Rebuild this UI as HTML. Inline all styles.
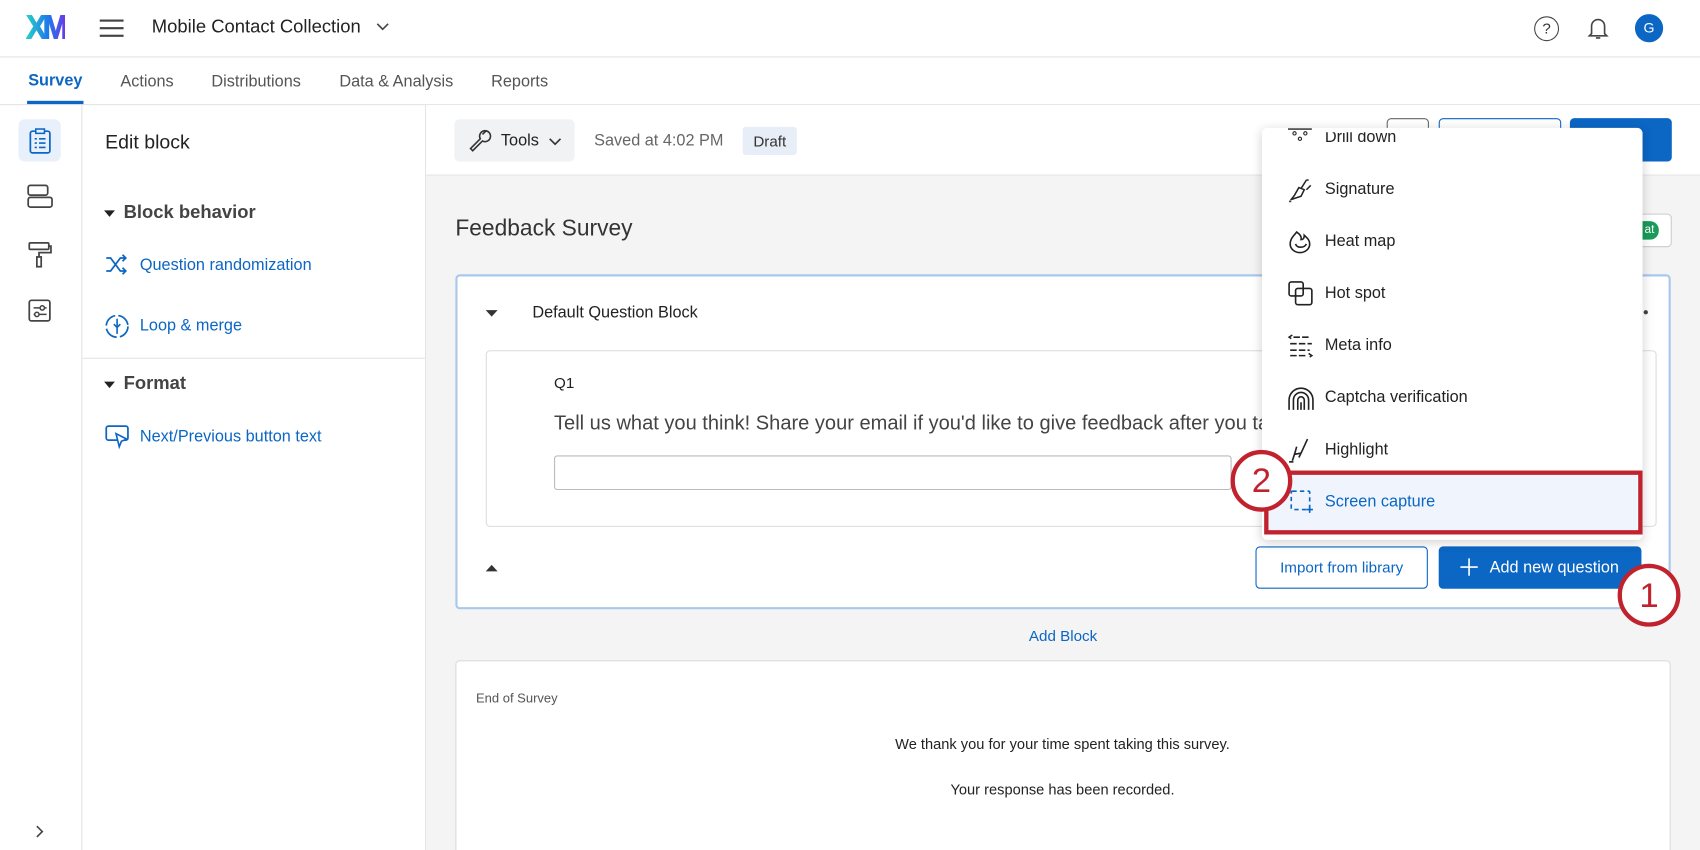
<!DOCTYPE html>
<html><head><meta charset="utf-8"><style>
*{box-sizing:border-box;margin:0;padding:0}
html,body{width:1700px;height:850px;overflow:hidden;background:#fff;font-family:"Liberation Sans",sans-serif}
#w{width:1568px;height:784px;position:relative;transform:scale(1.08418);transform-origin:0 0;color:#222}
.a{position:absolute}
.t{position:absolute;white-space:nowrap}
.blue{color:#0b66c4}
svg{position:absolute;overflow:visible}
</style></head><body><div id="w">
<!-- header -->
<div class="a" style="left:0;top:0;width:1568px;height:53px;border-bottom:1px solid #e4e4e4"></div>
<div class="t" style="left:24px;top:10px;font-size:29px;font-weight:900;letter-spacing:-4px;background:linear-gradient(90deg,#2ad1c6,#1e7bea 55%,#6a3be8);-webkit-background-clip:text;color:transparent;-webkit-text-stroke:0.8px transparent;transform:scaleY(1.05)">XM</div>
<div class="a" style="left:92px;top:18px;width:22px;height:2px;background:#444"></div>
<div class="a" style="left:92px;top:25px;width:22px;height:2px;background:#444"></div>
<div class="a" style="left:92px;top:32px;width:22px;height:2px;background:#444"></div>
<div class="t" style="left:140px;top:15px;font-size:17px;color:#222">Mobile Contact Collection</div>
<svg style="left:347px;top:21px" width="12" height="8"><path d="M1 1l5 5 5-5" fill="none" stroke="#444" stroke-width="1.5"/></svg>
<div class="a" style="left:1415px;top:15px;width:23px;height:23px;border:1.5px solid #444;border-radius:50%;font-size:14px;text-align:center;line-height:20px;color:#333">?</div>
<svg style="left:1464px;top:14px" width="20" height="24"><path d="M4 17V10a6 6 0 0 1 12 0v7l2 2H2z M8 21h4" fill="none" stroke="#444" stroke-width="1.5"/></svg>
<div class="a" style="left:1508px;top:13px;width:26px;height:26px;border-radius:50%;background:#0b66c4;color:#fff;font-size:13px;text-align:center;line-height:26px">G</div>
<!-- tabs -->
<div class="a" style="left:0;top:96px;width:1568px;height:1px;background:#e4e4e4"></div>
<div class="t" style="left:26px;top:66px;font-size:15px;font-weight:bold;color:#0b66c4">Survey</div>
<div class="a" style="left:25px;top:93px;width:52px;height:3px;background:#0b66c4"></div>
<div class="t" style="left:111px;top:67px;font-size:15px;color:#555">Actions</div>
<div class="t" style="left:195px;top:67px;font-size:15px;color:#555">Distributions</div>
<div class="t" style="left:313px;top:67px;font-size:15px;color:#555">Data &amp; Analysis</div>
<div class="t" style="left:453px;top:67px;font-size:15px;color:#555">Reports</div>
<!-- rail -->
<div class="a" style="left:75px;top:97px;width:1px;height:687px;background:#e4e4e4"></div>
<div class="a" style="left:17px;top:110px;width:39px;height:39px;background:#e8f0fb;border-radius:6px"></div>
<svg style="left:27px;top:118px" width="20" height="24"><rect x="1" y="3" width="18" height="20" rx="2" fill="none" stroke="#0b66c4" stroke-width="1.6"/><rect x="6" y="1" width="8" height="4" fill="#e8f0fb" stroke="#0b66c4" stroke-width="1.4"/><path d="M5 10h2M9 10h6M5 14h2M9 14h6M5 18h2M9 18h6" stroke="#0b66c4" stroke-width="1.5"/></svg>
<svg style="left:25px;top:170px" width="24" height="24"><rect x="1" y="1" width="18" height="9" rx="2" fill="none" stroke="#444" stroke-width="1.6"/><rect x="1" y="12" width="22" height="9" rx="2" fill="none" stroke="#444" stroke-width="1.6"/></svg>
<svg style="left:26px;top:222px" width="22" height="26"><rect x="1" y="2" width="18" height="6" rx="1" fill="none" stroke="#444" stroke-width="1.6"/><path d="M19 5h2v6H10v4" fill="none" stroke="#444" stroke-width="1.6"/><rect x="8" y="15" width="4" height="9" fill="none" stroke="#444" stroke-width="1.6"/></svg>
<svg style="left:26px;top:276px" width="22" height="22"><rect x="1" y="1" width="19" height="19" rx="2" fill="none" stroke="#444" stroke-width="1.6"/><path d="M5 8h12M5 14h12" stroke="#444" stroke-width="1.4"/><circle cx="13" cy="8" r="2" fill="#fff" stroke="#444" stroke-width="1.4"/><circle cx="8" cy="14" r="2" fill="#fff" stroke="#444" stroke-width="1.4"/></svg>
<svg style="left:33px;top:761px" width="8" height="12"><path d="M1 1l5 5-5 5" fill="none" stroke="#444" stroke-width="1.5"/></svg>
<!-- edit panel -->
<div class="a" style="left:392px;top:97px;width:1px;height:687px;background:#e4e4e4"></div>
<div class="t" style="left:97px;top:121px;font-size:18px;color:#222">Edit block</div>
<svg style="left:96px;top:194px" width="10" height="6"><path d="M0 0h10L5 6z" fill="#222"/></svg>
<div class="t" style="left:114px;top:186px;font-size:17px;font-weight:bold;color:#444">Block behavior</div>
<svg style="left:97px;top:234px" width="22" height="20"><path d="M1 4h4l9 12h5M1 16h4l9-12h5M16 1l3 3-3 3M16 13l3 3-3 3" fill="none" stroke="#0b66c4" stroke-width="1.6"/></svg>
<div class="t blue" style="left:129px;top:236px;font-size:15px">Question randomization</div>
<svg style="left:97px;top:290px" width="22" height="22"><circle cx="11" cy="11" r="10" fill="none" stroke="#0b66c4" stroke-width="1.6" stroke-dasharray="13 3"/><path d="M11 4v8M8 9l3 3 3-3M11 18v-6" fill="none" stroke="#0b66c4" stroke-width="1.5"/></svg>
<div class="t blue" style="left:129px;top:292px;font-size:15px">Loop &amp; merge</div>
<div class="a" style="left:76px;top:330px;width:316px;height:1px;background:#e4e4e4"></div>
<svg style="left:96px;top:352px" width="10" height="6"><path d="M0 0h10L5 6z" fill="#222"/></svg>
<div class="t" style="left:114px;top:344px;font-size:17px;font-weight:bold;color:#444">Format</div>
<svg style="left:97px;top:392px" width="24" height="22"><rect x="1" y="1" width="20" height="13" rx="2" fill="none" stroke="#0b66c4" stroke-width="1.6"/><path d="M10 8l3 12 2-5 5-2z" fill="#fff" stroke="#0b66c4" stroke-width="1.5"/></svg>
<div class="t blue" style="left:129px;top:394px;font-size:15px">Next/Previous button text</div>
<!-- main -->
<div class="a" style="left:393px;top:97px;width:1175px;height:687px;background:#f4f4f4"></div>
<div class="a" style="left:393px;top:97px;width:1175px;height:65px;background:#fff;border-bottom:1px solid #e4e4e4"></div>
<div class="a" style="left:419px;top:110px;width:111px;height:39px;background:#f1f2f4;border-radius:5px"></div>
<svg style="left:431px;top:118px" width="22" height="22"><path d="M3 19l9-9a5 5 0 1 1 2 2l-9 9z M14 6l3-3" fill="none" stroke="#333" stroke-width="1.5"/></svg>
<div class="t" style="left:462px;top:121px;font-size:15px;color:#222">Tools</div>
<svg style="left:506px;top:127px" width="12" height="8"><path d="M1 1l5 5 5-5" fill="none" stroke="#333" stroke-width="1.5"/></svg>
<div class="t" style="left:548px;top:121px;font-size:15px;color:#666">Saved at 4:02 PM</div>
<div class="a" style="left:685px;top:117px;width:50px;height:26px;background:#e8eef7;border-radius:3px;font-size:14px;text-align:center;line-height:26px;color:#333">Draft</div>
<div class="a" style="left:1279px;top:109px;width:39px;height:40px;border:1px solid #666;border-radius:4px;background:#fff"></div>
<div class="a" style="left:1327px;top:109px;width:113px;height:40px;border:1px solid #0b66c4;border-radius:4px;background:#fff"></div>
<div class="a" style="left:1448px;top:109px;width:94px;height:40px;background:#0b66c4;border-radius:4px"></div>
<div class="t" style="left:420px;top:199px;font-size:21px;color:#333">Feedback Survey</div>
<div class="a" style="left:1500px;top:197px;width:42px;height:31px;background:#fff;border:1px solid #ccc;border-radius:4px"></div>
<div class="a" style="left:1506px;top:204px;width:24px;height:17px;background:#1a9b5a;border-radius:8px;color:#fff;font-size:11px;line-height:17px;text-align:right;padding-right:4px">at</div>
<!-- block -->
<div class="a" style="left:420px;top:253px;width:1121px;height:309px;background:#fff;border:2px solid #a9c8ec;border-radius:4px"></div>
<svg style="left:448px;top:286px" width="11" height="6"><path d="M0 0h11L5.5 6z" fill="#333"/></svg>
<div class="t" style="left:491px;top:280px;font-size:15px;color:#222">Default Question Block</div>
<div class="a" style="left:1516px;top:286px;width:4px;height:4px;border-radius:50%;background:#444"></div>
<div class="a" style="left:448px;top:323px;width:1080px;height:163px;border:1px solid #dcdcdc;border-radius:4px;background:#fff"></div>
<div class="t" style="left:511px;top:345px;font-size:14px;color:#222">Q1</div>
<div class="t" style="left:511px;top:379px;font-size:18.5px;color:#444">Tell us what you think! Share your email if you'd like to give feedback after you take this survey.</div>
<div class="a" style="left:511px;top:420px;width:625px;height:32px;border:1px solid #bbb;border-radius:3px;background:#fff"></div>
<svg style="left:448px;top:521px" width="11" height="6"><path d="M0 6h11L5.5 0z" fill="#333"/></svg>
<div class="a" style="left:1158px;top:504px;width:159px;height:39px;border:1px solid #0b66c4;border-radius:4px;background:#fff;font-size:14px;color:#0b66c4;text-align:center;line-height:37px">Import from library</div>
<div class="a" style="left:1327px;top:504px;width:187px;height:39px;border-radius:4px;background:#0b66c4;color:#fff;font-size:15px;line-height:39px;padding-left:47px">Add new question</div>
<svg style="left:1347px;top:515px" width="16" height="16"><path d="M8 0v16M0 8h16" stroke="#fff" stroke-width="1.5"/></svg>
<div class="t blue" style="left:949px;top:578px;font-size:14px">Add Block</div>
<!-- end -->
<div class="a" style="left:420px;top:609px;width:1121px;height:180px;background:#fff;border:1px solid #dcdcdc;border-radius:4px"></div>
<div class="t" style="left:439px;top:637px;font-size:12px;color:#555">End of Survey</div>
<div class="t" style="left:980px;top:679px;font-size:13.5px;color:#222;transform:translateX(-50%)">We thank you for your time spent taking this survey.</div>
<div class="t" style="left:980px;top:721px;font-size:13.5px;color:#222;transform:translateX(-50%)">Your response has been recorded.</div>
<!-- dropdown -->
<div class="a" style="left:1164px;top:118px;width:351px;height:380px;background:#fff;border-radius:5px;box-shadow:0 2px 10px rgba(0,0,0,.18);overflow:hidden">
  <div class="a" style="left:6px;top:320px;width:340px;height:54px;background:#f0f5fd"></div>
</div>
<svg style="left:1188px;top:118px" width="24" height="28"><path d="M0 1h22" stroke="#222" stroke-width="1.3"/><circle cx="6" cy="5" r="1.5" fill="none" stroke="#222"/><circle cx="16" cy="5" r="1.5" fill="none" stroke="#222"/><circle cx="11" cy="10" r="1.5" fill="none" stroke="#222"/></svg>
<div class="t" style="left:1222px;top:118px;font-size:15px;color:#222;clip-path:inset(4px 0 0 0)">Drill down</div>
<svg style="left:1188px;top:163px" width="24" height="24"><path d="M3 21l3-4 4-7 5 2-3 6z M12 11l5-8M17 12l4-4M19 3l-2 0" fill="none" stroke="#222" stroke-width="1.4"/><path d="M1 23h2" stroke="#222"/></svg>
<div class="t" style="left:1222px;top:166px;font-size:15px;color:#222">Signature</div>
<svg style="left:1188px;top:211px" width="24" height="24"><path d="M8 3c-3 4-6 6-6 11a9 8 0 0 0 18 0c0-4-3-6-5-8 0 3-1 4-3 4 1-3-1-5-4-7z" fill="none" stroke="#222" stroke-width="1.5"/><path d="M7 14c1 4 8 4 10 0" fill="none" stroke="#222" stroke-width="1.5"/></svg>
<div class="t" style="left:1222px;top:214px;font-size:15px;color:#222">Heat map</div>
<svg style="left:1188px;top:259px" width="24" height="24"><rect x="1" y="1" width="13" height="13" rx="2" fill="none" stroke="#222" stroke-width="1.5"/><rect x="7" y="7" width="15" height="15" rx="2" fill="none" stroke="#222" stroke-width="1.5"/></svg>
<div class="t" style="left:1222px;top:262px;font-size:15px;color:#222">Hot spot</div>
<svg style="left:1188px;top:307px" width="24" height="24"><path d="M4 2L1 4l3 2M5 4h16M2 10h20M2 16h18M2 21h14M19 19l3 2-3 2" fill="none" stroke="#222" stroke-width="1.4" stroke-dasharray="6 2"/></svg>
<div class="t" style="left:1222px;top:310px;font-size:15px;color:#222">Meta info</div>
<svg style="left:1188px;top:355px" width="24" height="24"><path d="M1 23v-9a11 11 0 0 1 22 0v9M5 23v-9a7 7 0 0 1 14 0v9M9 23v-9a3 3 0 0 1 6 0v9M12 16v7" fill="none" stroke="#222" stroke-width="1.5"/></svg>
<div class="t" style="left:1222px;top:358px;font-size:15px;color:#222">Captcha verification</div>
<svg style="left:1188px;top:403px" width="24" height="24"><path d="M4 22l2-6 6-1 6-13M6 16l2-7M12 15l-2 4" fill="none" stroke="#222" stroke-width="1.5"/><path d="M1 23h4" stroke="#222" stroke-width="1.5"/></svg>
<div class="t" style="left:1222px;top:406px;font-size:15px;color:#222">Highlight</div>
<svg style="left:1190px;top:452px" width="22" height="22"><rect x="1" y="1" width="17" height="17" rx="1" fill="none" stroke="#0b66c4" stroke-width="1.5" stroke-dasharray="4 3"/><path d="M18 15v6M15 18h6" stroke="#0b66c4" stroke-width="1.5"/></svg>
<div class="t blue" style="left:1222px;top:454px;font-size:15px">Screen capture</div>
<div class="a" style="left:1166px;top:434px;width:349px;height:59px;border:4px solid #c0222e"></div>
<!-- callouts -->
<div class="a" style="left:1135px;top:415px;width:57px;height:57px;border-radius:50%;background:#fff;border:4px solid #c0222e;color:#c0222e;font-size:32px;text-align:center;line-height:49px">2</div>
<div class="a" style="left:1492px;top:520px;width:58px;height:58px;border-radius:50%;background:#fff;border:4px solid #c0222e;color:#c0222e;font-size:32px;text-align:center;line-height:50px">1</div>
</div></body></html>
